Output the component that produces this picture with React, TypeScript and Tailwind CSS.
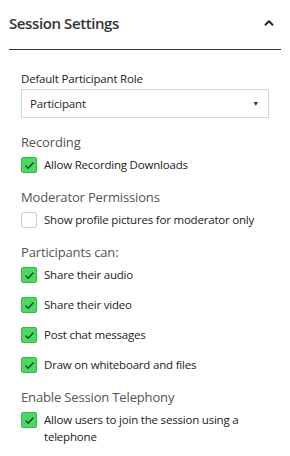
import { ChevronUp } from "lucide-react";

type Opt = { label: string; checked: boolean };

const sections: { title: string; options: Opt[]; gap?: boolean }[] = [
  { title: "Recording", options: [{ label: "Allow Recording Downloads", checked: true }] },
  {
    title: "Moderator Permissions",
    options: [{ label: "Show profile pictures for moderator only", checked: false }],
  },
  {
    title: "Participants can:",
    gap: true,
    options: [
      { label: "Share their audio", checked: true },
      { label: "Share their video", checked: true },
      { label: "Post chat messages", checked: true },
      { label: "Draw on whiteboard and files", checked: true },
    ],
  },
  {
    title: "Enable Session Telephony",
    options: [{ label: "Allow users to join the session using a telephone", checked: true }],
  },
];

function Checkbox({ checked }: { checked: boolean }) {
  return checked ? (
    <span className="flex h-4 w-4 shrink-0 items-center justify-center rounded-[2px] border border-[#3bb54a] bg-[#4cd864]">
      <svg width="11" height="9" viewBox="0 0 11 9" fill="none">
        <path d="M1.5 4.5L4.2 7.2L9.5 1.5" stroke="#1f3d22" strokeWidth="1.3" />
      </svg>
    </span>
  ) : (
    <span className="h-4 w-4 shrink-0 rounded-[2px] border border-[#cfcfcf] bg-white" />
  );
}

export default function App() {
  return (
    <div className="h-[456px] w-[290px] bg-white font-['Open_Sans',sans-serif] text-[#262626]">
      <div className="mx-[9px] flex items-center justify-between border-b border-[#333] pb-[16px] pt-[13px]">
        <h2 className="text-[15px] font-semibold leading-[20px] tracking-[-0.4px] text-[#333]">Session Settings</h2>
        <ChevronUp className="mr-[5px] h-[14px] w-[14px] text-[#222]" strokeWidth={3.2} />
      </div>

      <div className="px-[21px] pt-[21px]">
        <label className="block text-[11.5px] leading-[16px] tracking-[-0.2px] text-[#222]">
          Default Participant Role
        </label>
        <div className="mt-[2px] mb-px flex h-[29px] w-[248px] items-center justify-between border border-[#d6d6d6] pl-[8px] pr-[9px] text-[11.5px] tracking-[-0.2px]">
          <span>Participant</span>
          <span className="text-[7px] leading-none text-[#333]">▼</span>
        </div>

        {sections.map((s) => (
          <div key={s.title} className="mt-[15px]">
            <div className="text-[13px] leading-[18px] tracking-[-0.15px] text-[#555]">{s.title}</div>
            <div className={`mt-[6px] flex flex-col ${s.gap ? "gap-[14px]" : "gap-2"}`}>
              {s.options.map((o) => (
                <div key={o.label} className="flex items-start gap-[7px]">
                  <Checkbox checked={o.checked} />
                  <span className="mt-[-1px] text-[11.5px] leading-[17px] tracking-[-0.2px] text-[#222]">
                    {o.label}
                  </span>
                </div>
              ))}
            </div>
          </div>
        ))}
      </div>
    </div>
  );
}
